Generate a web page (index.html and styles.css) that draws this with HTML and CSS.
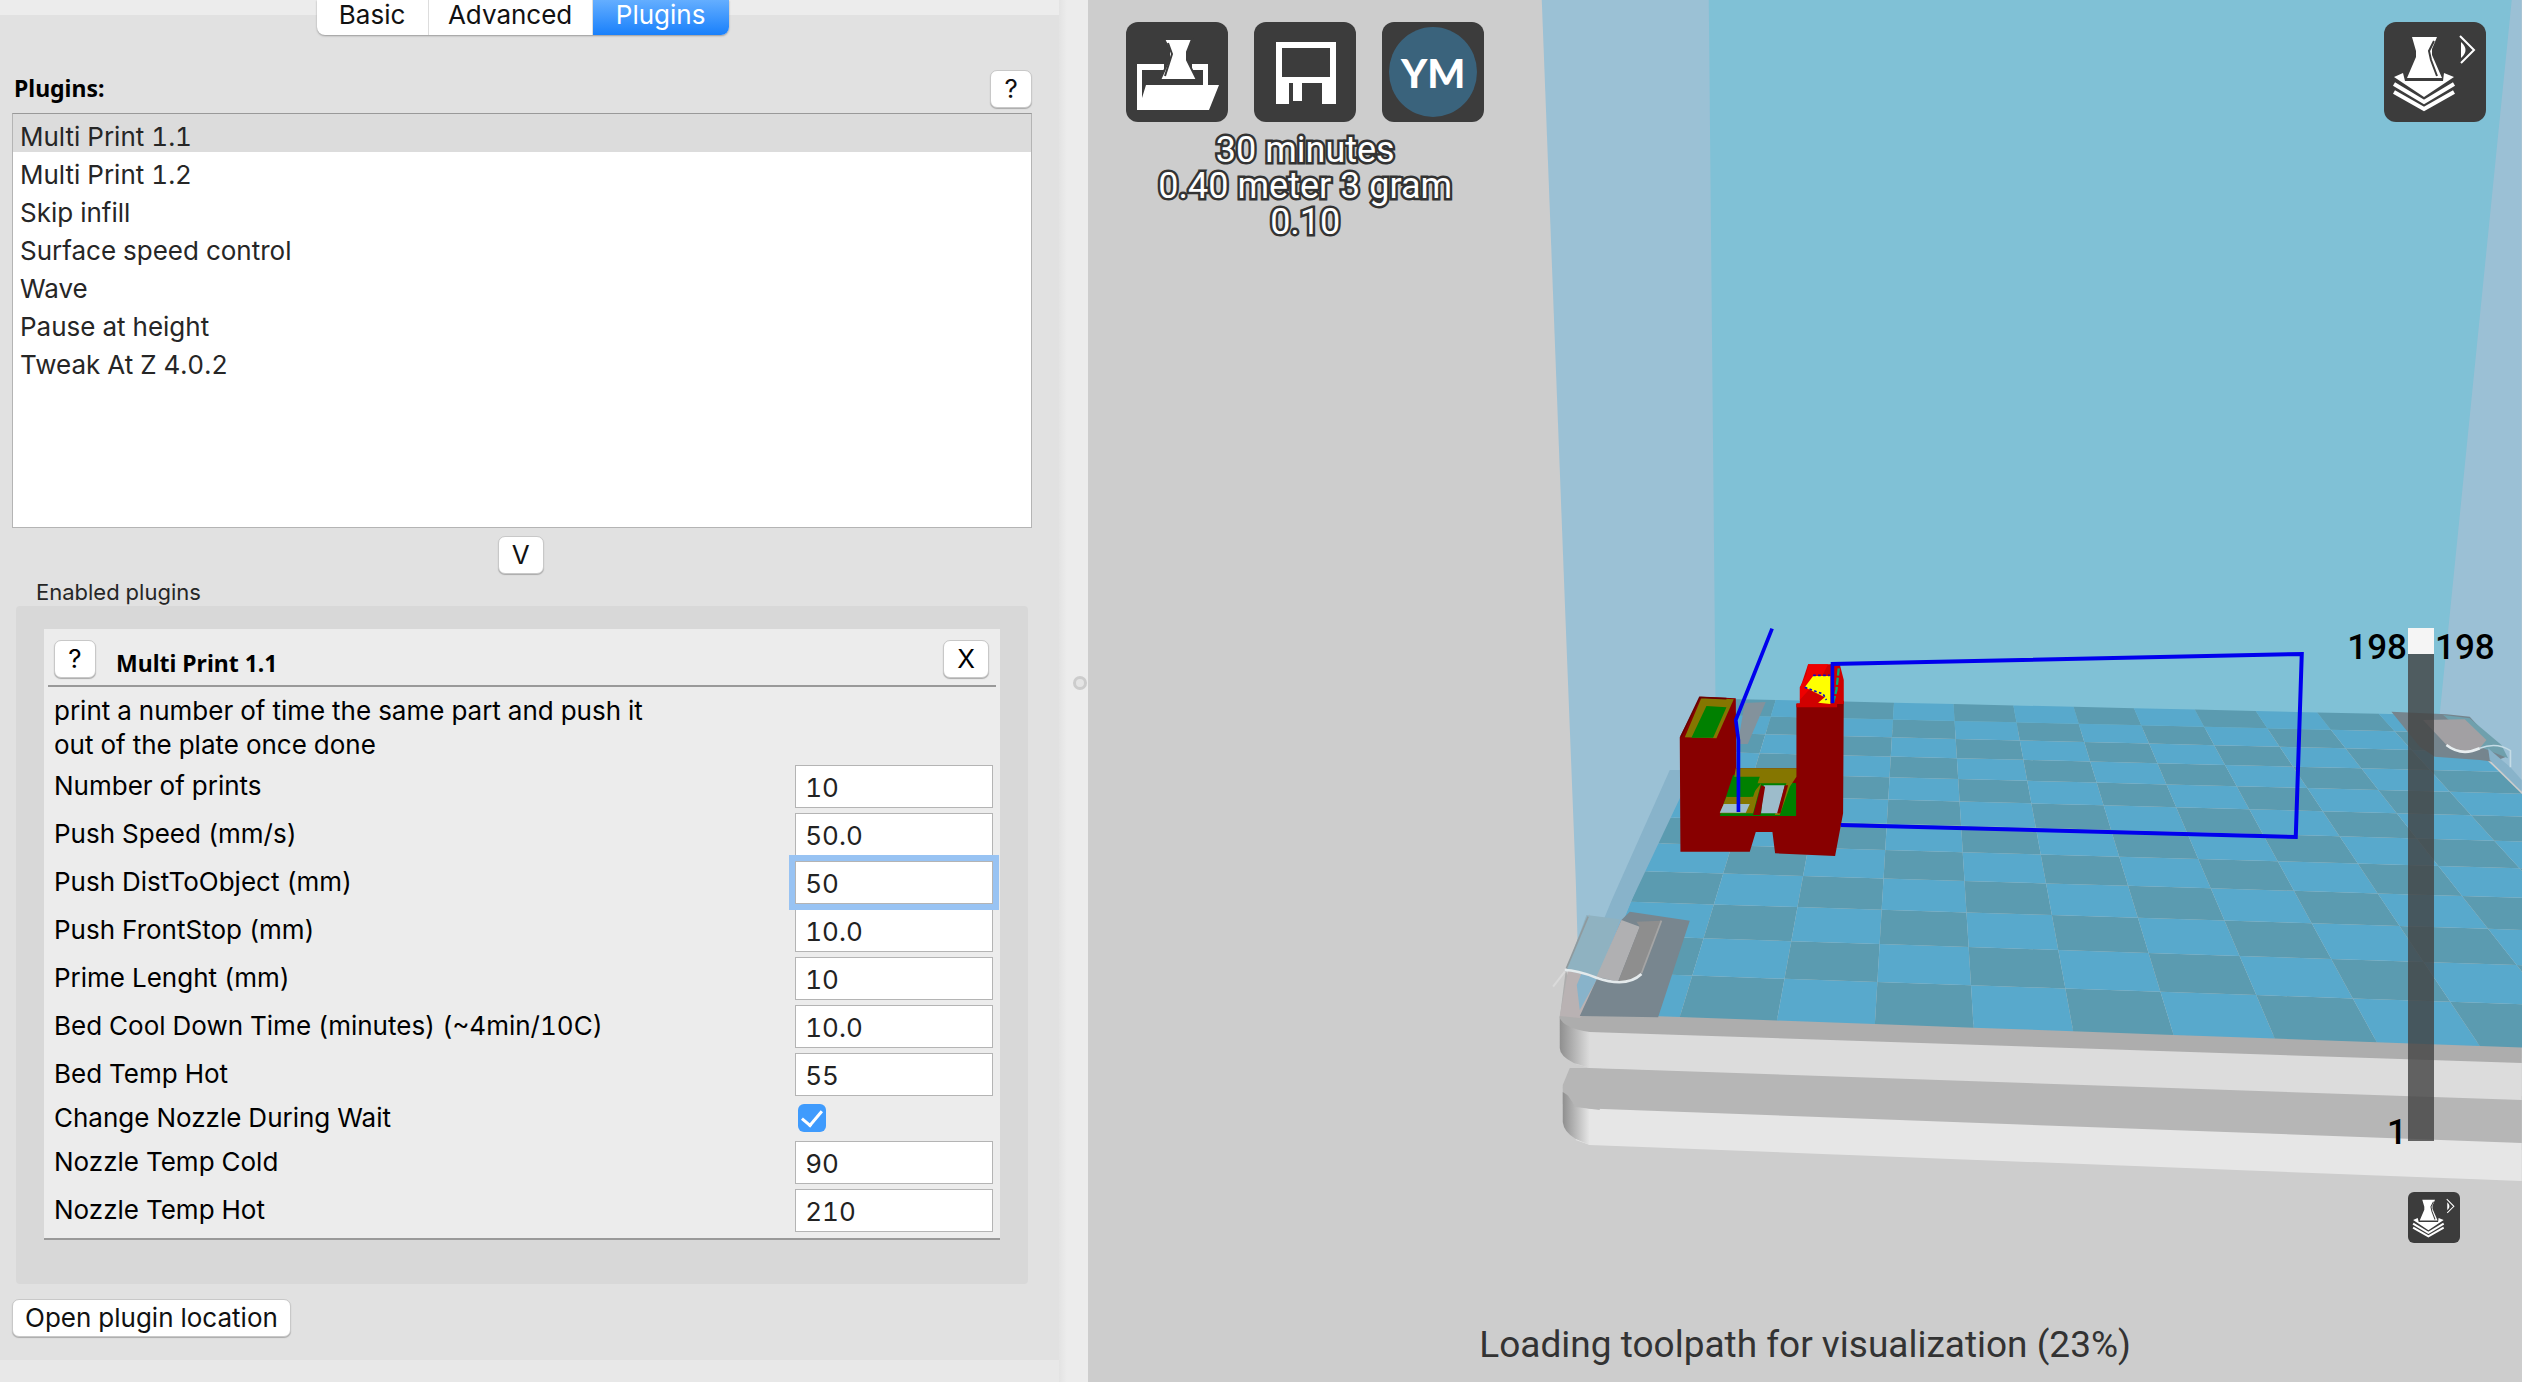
FILE: index.html
```html
<!DOCTYPE html>
<html lang="en">
<head>
<meta charset="utf-8">
<title>Plugins</title>
<link rel="stylesheet" href="styles.css">
</head>
<body>
<svg class="defs" aria-hidden="true">
  <symbol id="layers" viewBox="0 0 102 100">
    <path fill="#fff" d="M28 15H53L48 27V33L58 56H23L32 35V29Z"/>
    <path fill="none" stroke="#3c3c3c" stroke-width="2" d="M50 19L45 29L47 38L53 54"/>
    <path fill="#fff" d="M10 55L19 51L21 59H59L60 51L70 55L40 75Z"/>
    <path fill="none" stroke="#fff" stroke-width="4" d="M10 62L40 80L70 62M10 70L40 87L70 70"/>
    <path fill="none" stroke="#fff" stroke-width="2" d="M76 14L90 28L77 41"/>
    <path fill="#fff" d="M77 20Q86 28 77 36Z"/>
  </symbol>
</svg>
<main class="app">
  <section class="sidebar">
    <nav class="tabs">
      <button type="button">Basic</button>
      <button type="button">Advanced</button>
      <button type="button" class="active">Plugins</button>
    </nav>
    <div class="page">
      <header class="row-head">
        <h1>Plugins:</h1>
        <button type="button" class="btn square">?</button>
      </header>
      <ul class="plugin-list">
        <li class="selected">Multi Print 1.1</li>
        <li>Multi Print 1.2</li>
        <li>Skip infill</li>
        <li>Surface speed control</li>
        <li>Wave</li>
        <li>Pause at height</li>
        <li>Tweak At Z 4.0.2</li>
      </ul>
      <button type="button" class="btn square add">V</button>
      <h2 class="group-title">Enabled plugins</h2>
      <div class="group">
        <form class="card">
          <header class="card-head">
            <button type="button" class="btn square">?</button>
            <h3>Multi Print 1.1</h3>
            <button type="button" class="btn square">X</button>
          </header>
          <p>print a number of time the same part and push it<br>out of the plate once done</p>
          <div class="field"><label for="f1">Number of prints</label><input id="f1" type="text" value="10"></div>
          <div class="field"><label for="f2">Push Speed (mm/s)</label><input id="f2" type="text" value="50.0"></div>
          <div class="field"><label for="f3">Push DistToObject (mm)</label><input id="f3" class="focused" type="text" value="50"></div>
          <div class="field"><label for="f4">Push FrontStop (mm)</label><input id="f4" type="text" value="10.0"></div>
          <div class="field"><label for="f5">Prime Lenght (mm)</label><input id="f5" type="text" value="10"></div>
          <div class="field"><label for="f6">Bed Cool Down Time (minutes) (~4min/10C)</label><input id="f6" type="text" value="10.0"></div>
          <div class="field"><label for="f7">Bed Temp Hot</label><input id="f7" type="text" value="55"></div>
          <div class="field check"><label for="f8">Change Nozzle During Wait</label><input id="f8" type="checkbox" checked></div>
          <div class="field"><label for="f9">Nozzle Temp Cold</label><input id="f9" type="text" value="90"></div>
          <div class="field"><label for="f10">Nozzle Temp Hot</label><input id="f10" type="text" value="210"></div>
        </form>
      </div>
      <button type="button" class="btn open">Open plugin location</button>
    </div>
  </section>
  <div class="sash"><span class="grip"></span></div>
  <section class="stage">
    <svg class="scene" viewBox="1088 0 1434 1382" preserveAspectRatio="xMaxYMax slice" aria-hidden="true">
      <defs>
        <linearGradient id="end" x1="0" x2="1"><stop offset="0" stop-color="#8f8f8f"/><stop offset="1" stop-color="#dcdcdc"/></linearGradient>
        <linearGradient id="end2" x1="0" x2="1"><stop offset="0" stop-color="#8f8f8f"/><stop offset="1" stop-color="#e6e6e6"/></linearGradient>
      </defs>
      <!-- build volume walls -->
      <path fill="#9bc1d5" d="M1542 0H1720V720L1580 1016L1576 880L1565 600Z"/>
      <path fill="#80c1d6" d="M1709 0H2514L2440 730H1716Z"/>
      <path fill="#9bc0d5" d="M2512 0H2522V790L2440 714Z"/>
      <!-- machine base -->
      <path fill="#b6b6b6" d="M1570 1068H1600L2522 1096V1150L1580 1112L1563 1104L1563 1085Z"/>
      <path fill="#e6e6e6" d="M1576 1108L2522 1143V1181L1590 1145L1576 1140Z"/>
      <path fill="url(#end2)" d="M1563 1092L1590 1110V1145L1576 1139Q1564 1132 1563 1122Z"/>
      <path fill="#b6b6b6" d="M1563 1088L1571 1068L1600 1068V1110L1576 1107Z"/>
      <path fill="#dcdcdc" d="M1576 1026L2522 1058V1100L1590 1068L1576 1064Z"/>
      <path fill="url(#end)" d="M1560 1016L1590 1030V1068L1574 1063Q1560 1056 1560 1048Z"/>
      <path fill="#adadad" d="M1560 1018L1566 970L1580 1010L2522 1044V1063L1590 1032Q1564 1028 1560 1018Z"/>
      <path fill="#b9b2b3" d="M1560 1016L1568 972L1590 914L1600 1000L1580 1018Z"/>
      <g id="plate"></g>
      <path fill="#88b3ca" d="M1612 900L1670 770L1684 770L1684 790L1632 900L1608 960L1580 1010L1577 985Z"/>
      <!-- front left clip -->
      <g transform="translate(1540 880) scale(.33333)">
        <path fill="#78868f" d="M270 95L450 122L355 412L120 408L170 300L245 120Z"/>
        <path fill="#8fb2c1" d="M140 105L240 118L175 290L110 278L80 270Z"/>
        <path fill="#b0b0b2" d="M245 120L300 140L235 305L170 290Z"/>
        <path fill="#8e8e8e" d="M300 140L290 125L365 122L305 280Q280 310 235 305Z"/>
        <path fill="none" stroke="#a5a5a5" stroke-width="5" d="M365 122L305 280"/>
        <path fill="none" stroke="#8f9a9e" stroke-width="5" d="M145 110L80 265"/>
        <path fill="none" stroke="#e4eaec" stroke-width="8" d="M75 270Q110 270 170 293Q260 325 305 282"/>
        <path fill="none" stroke="#dadada" stroke-width="6" d="M75 275L40 320"/>
      </g>
      <!-- back left clip -->
      <path fill="#83929c" d="M1745 703L1766 702L1748 744L1738 744Z"/>
      <!-- back right clip -->
      <g transform="translate(2380 680) scale(.33333)">
        <path fill="#75858e" d="M35 95L200 103L270 110L380 230L340 245L300 240L165 230L120 200Z"/>
        <path fill="#6fa0ad" d="M190 105L270 115L365 195L385 235L300 200Z"/>
        <path fill="#a2a0a3" d="M130 120L255 118L320 180L300 205Q250 230 205 200Z"/>
        <path fill="#88b3ca" d="M325 205L392 262L426 300V335L330 240Z"/>
        <path fill="none" stroke="#e8eef0" stroke-width="8" d="M200 195Q245 230 300 205"/>
        <path fill="none" stroke="#c5dce6" stroke-width="5" d="M300 205Q350 185 392 212V262"/>
      </g>
      <!-- sliced model and travel moves -->
      <g transform="translate(1540 600) scale(.33333)">
        <path fill="#800" d="M420 412L482 290L588 295L590 505L770 505V312L912 302L910 640L886 768L706 760L698 696H648L630 755H422Z"/>
        <path fill="#857600" d="M435 412L485 293L582 298L530 415Z"/>
        <path fill="#008000" d="M455 413L500 318L560 322L520 413Z"/>
        <path fill="none" stroke="#6b0000" stroke-width="5" d="M424 410L480 292L560 296"/>
        <path fill="#008000" d="M580 525L768 550V648H540Z"/>
        <path fill="#857600" d="M588 505H770V530L750 560L720 645H705L740 550H664L640 640H540L560 590H632L664 550H580Z"/>
        <path fill="#008000" d="M580 530H660L640 590H562ZM760 550H769V648H735Z"/>
        <path fill="#9dbccb" d="M552 612H630L618 638H540ZM672 556H735L715 640H664Z"/>
        <path fill="#800" d="M664 556L676 560L662 645H640ZM735 556L745 556L722 640L712 640Z"/>
        <path fill="#d00000" d="M770 310H892V322H770ZM805 193H900L912 240V312H780L782 262Z"/>
        <path fill="#e00" d="M805 193H865L850 222L780 300V262L800 225Z"/>
        <path fill="#ff0" d="M820 228H872V312L835 308L855 292L795 262Z"/>
        <path fill="none" stroke="#0a0acc" stroke-width="5" stroke-dasharray="8 7" d="M820 226H870M795 262L850 282L860 300"/>
        <path fill="none" stroke="#00b070" stroke-width="7" stroke-dasharray="22 6" d="M897 205L890 270L880 308"/>
        <path fill="none" stroke="#00e" stroke-width="11" d="M697 86L630 255L588 360L596 420V636M878 310V192"/>
      </g>
      <path fill="none" stroke="#00e" stroke-width="4" d="M1831 664L2302 654L2296 837L1841 825"/>
    </svg>
    <div class="overlay">
      <div class="top">
        <div class="files">
          <div class="tools">
            <button type="button" class="tool" aria-label="Load">
              <svg viewBox="0 0 102 100"><path fill="#fff" d="M11 42H38V48H16V76L20 63H77V48H66V42H82V63H93L83 88H11Z"/><path fill="#fff" stroke="#3c3c3c" stroke-width="2" d="M38 17H66L61 30V38L71 58H34L43 38V27Z"/><path fill="none" stroke="#3c3c3c" stroke-width="2" d="M42 21L46 32L39 54"/></svg>
            </button>
            <button type="button" class="tool" aria-label="Save">
              <svg viewBox="0 0 102 100"><path fill="#fff" fill-rule="evenodd" d="M22 20H82V82H68V61H35V82H22ZM28 26V55H76V26Z"/><path fill="#fff" d="M39 61H48V79H39Z"/></svg>
            </button>
            <button type="button" class="tool"><span class="ym">YM</span></button>
          </div>
          <p class="info">30 minutes<br>0.40 meter 3 gram<br>0.10</p>
        </div>
        <button type="button" class="tool" aria-label="View mode"><svg><use href="#layers"/></svg></button>
      </div>
      <div class="layer">
        <div class="ends"><label for="layer">198</label><span>1</span></div>
        <input id="layer" type="range" min="1" max="198" value="198">
        <output for="layer">198</output>
      </div>
      <button type="button" class="tool mini" aria-label="Layers"><svg><use href="#layers"/></svg></button>
      <p class="status">Loading toolpath for visualization (23%)</p>
    </div>
  </section>
</main>
<script src="plate.js"></script>
</body>
</html>
```
FILE: styles.css
```css
* { box-sizing: border-box; }
body { margin: 0; font: 26px/34px Inter, sans-serif; font-variant-numeric: tabular-nums; color: #111; background: #ececec; }
h1, h2, h3, p, ul { margin: 0; padding: 0; }
button, input { font: inherit; color: inherit; margin: 0; }
.defs { display: none; }
.app { display: flex; min-height: 100vh; }

.sidebar { width: 42%; display: flex; flex-direction: column; background: linear-gradient(#ececec 15px, #e1e1e1 15px); border-bottom: 22px solid #e8e8e8; }
.tabs { display: grid; grid-template-columns: 112px 164px 136px; align-self: center; height: 35px; margin-right: 14px; border-radius: 0 0 8px 8px; background: #fff; box-shadow: 0 1px 2px #999; }
.tabs button { border: 0; border-right: 1px solid #ddd; background: none; padding: 0 0 6px; line-height: 30px; height: 35px; }
.tabs .active { border: 0; border-radius: 0 0 8px 0; color: #fff; background: linear-gradient(#64aeff, #1980fb); }
.page { padding: 35px 27px 20px 12px; display: flex; flex-direction: column; }
.btn { height: 38px; padding: 0 12px; line-height: 34px; border: 1px solid #c8c8c8; border-radius: 7px; background: #fff; box-shadow: 0 1px 1px #aaa; }
.square { width: 42px; padding: 0; }
.row-head { display: flex; justify-content: space-between; align-items: center; }
h1, h3 { font: bold 23px/32px "Noto Sans", sans-serif; color: #000; }
h1 { padding: 0 0 3px 2px; }
.plugin-list { list-style: none; margin-top: 5px; height: 415px; border: 1px solid #b4b4b4; border-top-color: #999; background: #fff; color: #262626; }
.plugin-list li { height: 38px; line-height: 46px; padding-left: 7px; }
.plugin-list .selected { background: #dcdcdc; }
.add { align-self: center; width: 46px; margin: 8px 3px 0 0; }
.group-title { font-size: 22px; font-weight: 400; line-height: 28px; margin: 4px 0 0 24px; color: #262626; }
.group { margin: 0 4px 0 4px; padding: 23px 28px 44px; background: #d8d8d8; border-radius: 4px; }
.card { background: #ececec; color: #000; padding: 0 7px 4px 10px; border-bottom: 2px solid #999; }
.card-head { display: flex; align-items: center; height: 58px; gap: 20px; margin: 0 -3px 0 -6px; padding: 4px 7px 0 6px; border-bottom: 2px solid #999; }
.card-head h3 { flex: 1; padding-top: 8px; }
.card-head .btn:last-child { width: 46px; }
.card p { padding-top: 7px; }
.field { display: grid; grid-template-columns: 1fr 198px; align-items: center; height: 48px; }
.field input[type=text] { width: 198px; height: 43px; padding: 3px 0 0 9px; border: 1px solid #b4b4b4; border-radius: 0; background: #fff; outline: 0; color: #222; }
.field .focused { position: relative; border-color: #fff; border-radius: 2px; box-shadow: 0 0 0 6px #98c3f3; color: #000; }
.check { height: 40px; }
.check input { appearance: none; width: 28px; height: 28px; margin-left: 3px; border-radius: 6px; background: #3f9bfd; display: grid; place-items: center; }
.check input::before { content: ""; width: 9px; height: 17px; border: solid #fff; border-width: 0 3px 3px 0; transform: rotate(40deg); margin-top: -4px; }
.open { align-self: flex-start; margin-top: 15px; }

.sash { width: 29px; display: flex; align-items: center; justify-content: flex-end; padding-bottom: 16px; background: linear-gradient(90deg, #e3e3e3, #ececec 8px); }
.grip { width: 14px; height: 14px; margin-right: 1px; border: 3px solid #ccc; border-radius: 50%; background: #e4e4e4; }

.stage { position: relative; flex: 1; background: #cdcdcd; font-family: Roboto, sans-serif; }
.scene { position: absolute; inset: 0; width: 100%; height: 100%; }
.overlay { position: relative; min-height: 100%; display: flex; flex-direction: column; padding: 22px 0 15px; }
.top { display: flex; justify-content: space-between; align-items: flex-start; padding: 0 36px 0 38px; }
.tools { display: flex; gap: 26px; }
.tool { width: 102px; height: 100px; padding: 0; border: 0; border-radius: 12px; background: #3c3c3c; display: grid; place-items: center; }
.tool svg { width: 100%; height: 100%; display: block; }
.ym { width: 88px; height: 90px; border-radius: 50%; background: #3a637c; color: #fff; font: 900 40px/92px Lato, sans-serif; }
.info { margin-top: 10px; text-align: center; font-size: 36px; line-height: 36px; color: #fff; -webkit-text-stroke: 5px #333; paint-order: stroke fill; }
.layer { display: grid; grid-template-columns: 1fr 26px 87px; column-gap: 1px; margin-top: auto; font-size: 35px; font-weight: 500; line-height: 40px; color: #000; }
.ends { display: flex; flex-direction: column; justify-content: space-between; align-items: flex-end; }
.layer input { appearance: none; writing-mode: vertical-lr; direction: rtl; width: 26px; height: 513px; margin-bottom: 12px; background: rgba(66, 66, 66, .8); }
.layer input::-webkit-slider-thumb { appearance: none; width: 26px; height: 26px; background: #f5f5f5; }
.mini { width: 52px; height: 51px; border-radius: 6px; align-self: flex-end; margin: 39px 62px 80px 0; }
.status { text-align: center; font-size: 37px; line-height: 44px; color: #333; }
```
FILE: plate.js
```js
// Chequered build plate: cells are laid out on a flat grid and projected
// to the view through a homography given by four known grid corners.
(function () {
  var near = [[1680, 1017], [2480, 1046]];
  var far = [[1776, 700], [2256, 711]];
  var u0 = -3, uSpan = 8, vSpan = 12;
  var p0 = near[0], p1 = near[1], p2 = far[1], p3 = far[0];
  var dx1 = p1[0] - p2[0], dx2 = p3[0] - p2[0], sx = p0[0] - p1[0] + p2[0] - p3[0];
  var dy1 = p1[1] - p2[1], dy2 = p3[1] - p2[1], sy = p0[1] - p1[1] + p2[1] - p3[1];
  var det = dx1 * dy2 - dx2 * dy1;
  var g = (sx * dy2 - dx2 * sy) / det, h = (dx1 * sy - sx * dy1) / det;
  var a = p1[0] - p0[0] + g * p1[0], b = p3[0] - p0[0] + h * p3[0];
  var d = p1[1] - p0[1] + g * p1[1], e = p3[1] - p0[1] + h * p3[1];

  function project(u, v) {
    var s = (u - u0) / uSpan, t = v / vSpan, w = g * s + h * t + 1;
    return [(a * s + b * t + p0[0]) / w, (d * s + e * t + p0[1]) / w];
  }
  var plate = document.getElementById("plate");
  for (var v = 0; v < 12; v++) {
    for (var u = -4; u < 8; u++) {
      var cell = document.createElementNS("http://www.w3.org/2000/svg", "polygon");
      cell.setAttribute("points", [project(u, v), project(u + 1, v), project(u + 1, v + 1), project(u, v + 1)].join(" "));
      cell.setAttribute("fill", (u + v + 4) % 2 ? "#5b9bb0" : "#58a9cc");
      plate.appendChild(cell);
    }
  }
})();
```
